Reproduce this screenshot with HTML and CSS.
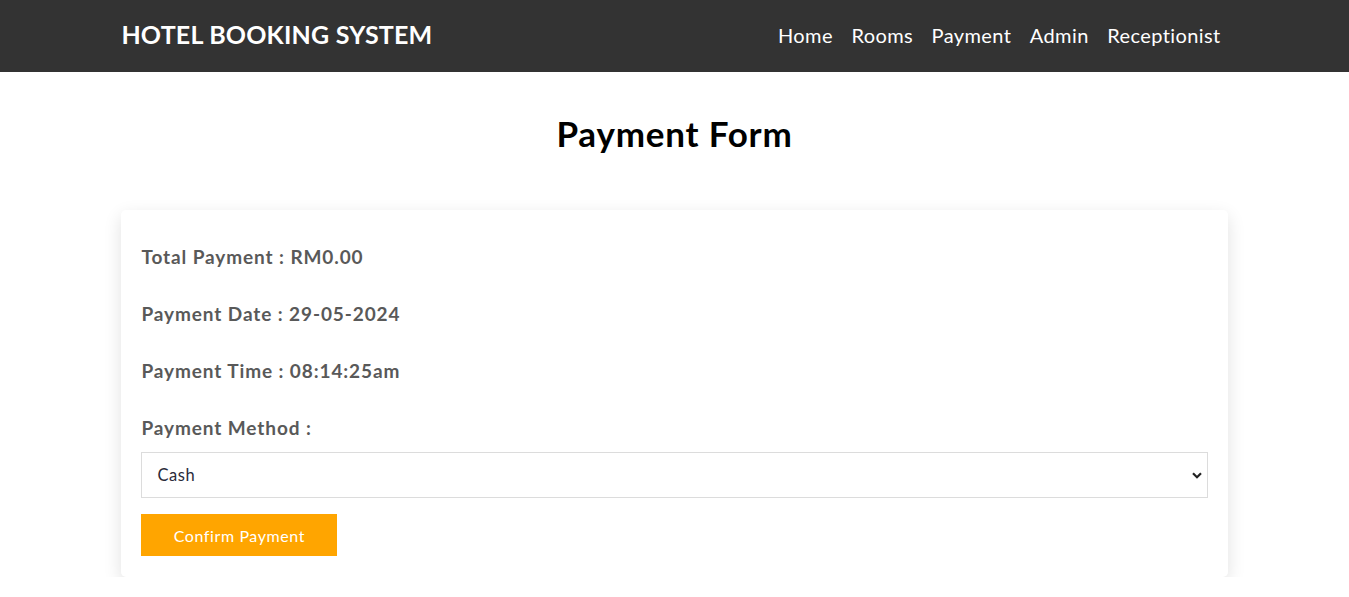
FILE: index.html
```html
<!DOCTYPE html>
<html lang="en">
<head>
<meta charset="utf-8">
<title>Payment Form</title>
<link rel="stylesheet" href="styles.css">
</head>
<body>
<header class="navbar">
  <div class="nav-inner">
    <div class="brand">HOTEL BOOKING SYSTEM</div>
    <nav class="links">
      <a href="#">Home</a>
      <a href="#">Rooms</a>
      <a href="#">Payment</a>
      <a href="#">Admin</a>
      <a href="#">Receptionist</a>
    </nav>
  </div>
</header>
<main class="page">
  <h1 class="title">Payment Form</h1>
  <form class="card">
    <p class="row">Total Payment : RM0.00</p>
    <p class="row">Payment Date : 29-05-2024</p>
    <p class="row">Payment Time : 08:14:25am</p>
    <p class="row row-last">Payment Method :</p>
    <div class="select-wrap">
      <select class="select">
        <option>Cash</option>
        <option>Card</option>
      </select>
      <svg class="chev" width="10" height="7" viewBox="0 0 10 7"><path d="M1 1.2 L5 5.2 L9 1.2" fill="none" stroke="#222" stroke-width="2.2"/></svg>
    </div>
    <button type="button" class="btn">Confirm Payment</button>
  </form>
</main>
</body>
</html>
```
FILE: styles.css
```css
* { box-sizing: border-box; }
body {
  margin: 0;
  font-family: "Lato", "Noto Sans", sans-serif;
  background: #fff;
  color: #000;
}
.navbar {
  background: #333333;
  height: 72px;
}
.nav-inner {
  width: 82%;
  margin: 0 auto;
  height: 100%;
  display: flex;
  align-items: center;
  justify-content: space-between;
  padding: 0 7px 4px 0;
}
.brand {
  color: #fff;
  font-weight: 700;
  font-size: 25px;
  letter-spacing: 0.2px;
}
.links {
  display: flex;
  gap: 18.5px;
  padding-top: 1px;
}
.links a {
  color: #fff;
  text-decoration: none;
  font-size: 20px;
  letter-spacing: 0.4px;
}
.page {
  width: 82%;
  margin: 0 auto;
}
.title {
  margin: 0;
  height: 138px;
  text-align: center;
  font-size: 35px;
  font-weight: 700;
  line-height: 1;
  padding-top: 44px;
  letter-spacing: 0.8px;
}
.card {
  background: #fff;
  border-radius: 5px;
  box-shadow: 0 6px 18px rgba(0,0,0,0.12);
  padding: 33px 20px 21px;
}
.row {
  margin: 0 0 29px 0;
  line-height: 28px;
  font-size: 19px;
  font-weight: 700;
  color: #595959;
  letter-spacing: 0.9px;
}
.row-last { margin-bottom: 10px; }
.select-wrap {
  position: relative;
}
.select {
  appearance: none;
  -webkit-appearance: none;
  display: block;
  width: 100%;
  height: 46px;
  border: 1px solid #dcdcdc;
  border-radius: 0;
  background: #fff;
  padding: 0 15px;
  font-family: inherit;
  font-size: 16.5px;
  letter-spacing: 0.6px;
  color: #2a2a3a;
}
.chev {
  position: absolute;
  right: 6px;
  top: 20px;
}
.btn {
  display: block;
  margin-top: 16px;
  width: 196px;
  height: 42px;
  border: none;
  background: #ffa500;
  color: #fff;
  font-family: inherit;
  font-size: 16px;
  letter-spacing: 0.6px;
}
```
